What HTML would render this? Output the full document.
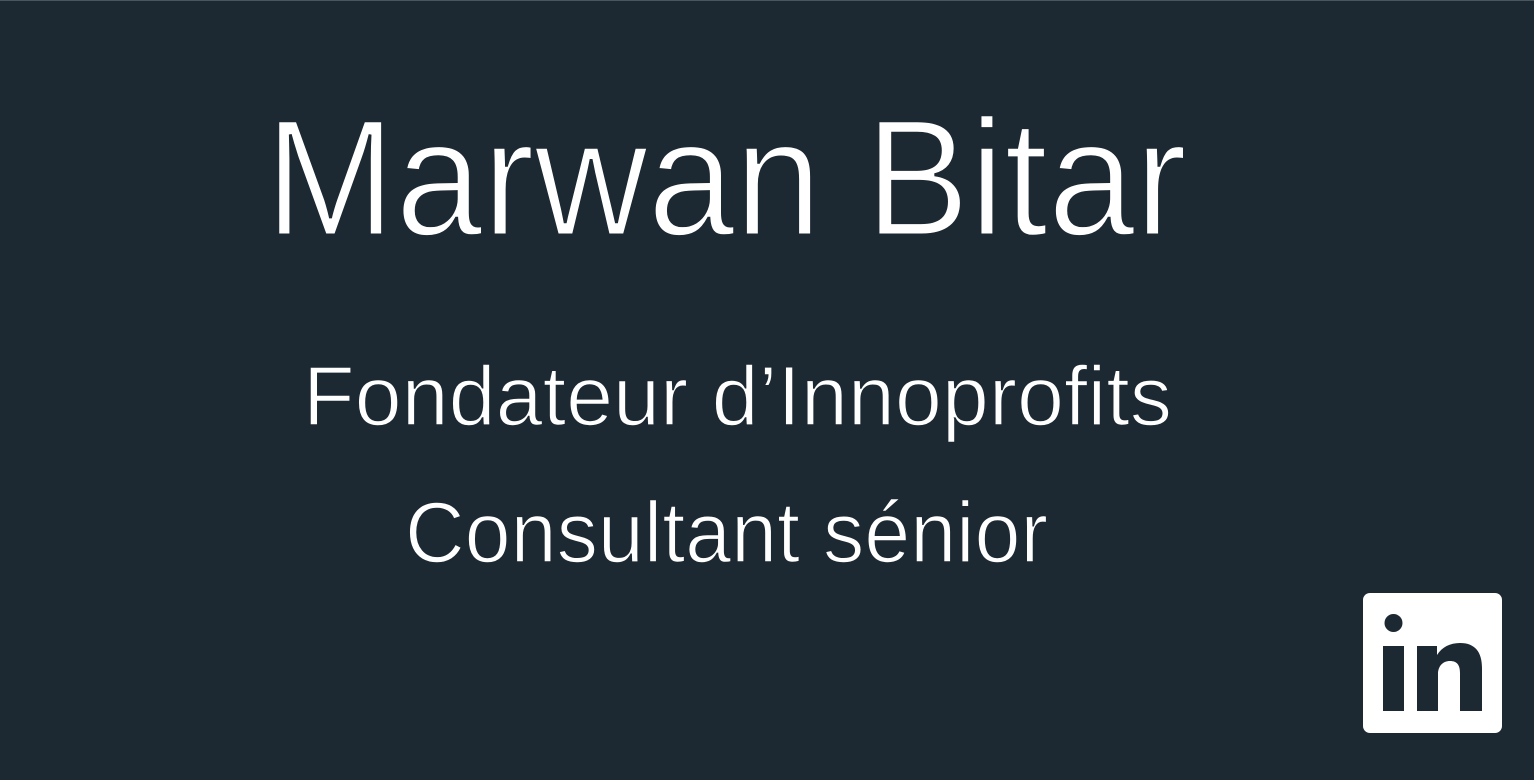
<!DOCTYPE html>
<html><head><meta charset="utf-8"><style>
html,body{margin:0;padding:0;background:#1c2932;}
body{width:1534px;height:780px;overflow:hidden;position:relative;}
.top{position:absolute;left:0;top:0;width:1534px;height:1px;background:#4a555c;}
</style></head><body>
<div class="top"></div>
<svg width="1534" height="780" style="position:absolute;left:0;top:0" xmlns="http://www.w3.org/2000/svg">
<g fill="#ffffff" font-family="Liberation Sans, sans-serif" stroke="#1c2932" paint-order="fill stroke">
<text x="265" y="235" font-size="166" stroke-width="3" textLength="922" lengthAdjust="spacingAndGlyphs">Marwan Bitar</text>
<text x="303" y="425" font-size="84" stroke-width="1.6" textLength="869" lengthAdjust="spacingAndGlyphs">Fondateur d’Innoprofits</text>
<text x="405" y="562" font-size="86" stroke-width="1.6" textLength="643" lengthAdjust="spacingAndGlyphs">Consultant sénior</text>
</g>
<rect x="1363" y="593" width="139" height="140" rx="7" fill="#ffffff"/>
<circle cx="1393.5" cy="623" r="9" fill="#1c2932"/>
<rect x="1383" y="646" width="21" height="65" fill="#1c2932"/>
<path d="M1417 646 H1437 V655 C1442 647 1450 643 1460 643 C1475 643 1482 652 1482 668 V711 H1460 V673 C1460 665 1457 661 1450 661 C1443 661 1438 666 1438 674 V711 H1417 Z" fill="#1c2932"/>
</svg>
</body></html>
